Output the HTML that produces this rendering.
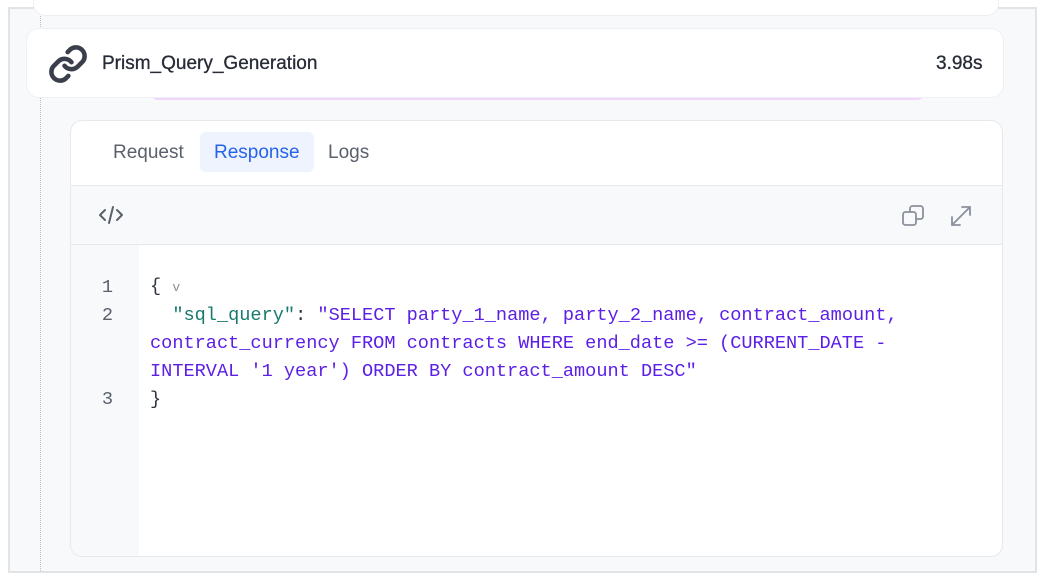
<!DOCTYPE html>
<html><head><style>
body{margin:0;width:1042px;height:577px;background:#fff;font-family:"Liberation Sans",sans-serif;position:relative;overflow:hidden}
.outer{position:absolute;left:8px;top:7px;width:1025px;height:562px;border:2px solid #e2e3e6;background:#f8f9fb}
.abs{position:absolute}
.mono{font-family:"Liberation Mono",monospace;font-size:18.6px}
</style></head><body>
<div class="outer"></div>
<div class="abs" style="left:33px;top:0;width:964px;height:15px;background:#fff;border:1px solid #eceef2;border-top:none;border-radius:0 0 12px 12px"></div>
<div class="abs" style="left:40px;top:16px;height:555px;border-left:1px dotted #b8bcc8"></div>
<div class="abs" style="left:150px;top:92px;width:775px;height:8px;background:#f0d6fb;border-radius:0 0 8px 8px"></div>
<div class="abs" style="left:27px;top:29px;width:976px;height:68px;background:#fff;border-radius:12px;box-shadow:0 0 0 1px #eef0f4"></div>
<svg class="abs" style="left:46px;top:43px" width="44" height="42" viewBox="0 0 24 24" fill="none" stroke="#3a3f4b" stroke-width="2.6" stroke-linecap="round"><path d="M10 13a5 5 0 0 0 7.5.5l3-3a5 5 0 0 0-7-7l-1.7 1.7"/><path d="M14 11a5 5 0 0 0-7.5-.5l-3 3a5 5 0 0 0 7 7l1.7-1.7"/></svg>
<div class="abs" style="left:102px;top:53px;font-size:19px;color:#262b36;-webkit-text-stroke:0.3px #262b36">Prism_Query_Generation</div>
<div class="abs" style="left:936px;top:53px;font-size:19px;color:#262b36;-webkit-text-stroke:0.3px #262b36">3.98s</div>
<div class="abs" style="left:70px;top:120px;width:931px;height:435px;background:#fff;border:1px solid #e6e8ec;border-radius:12px;overflow:hidden">
  <div class="abs" style="left:129px;top:11px;width:114px;height:40px;background:#eef3fd;border-radius:6px"></div>
  <div class="abs" style="left:42px;top:21px;font-size:19px;color:#5a606c">Request</div>
  <div class="abs" style="left:143px;top:21px;font-size:19px;color:#2563eb">Response</div>
  <div class="abs" style="left:257px;top:21px;font-size:19px;color:#5a606c">Logs</div>
  <div class="abs" style="left:0;top:64px;width:931px;height:58px;background:#f8f9fb;border-top:1px solid #e6e8ec;border-bottom:1px solid #e6e8ec"></div>
  <svg class="abs" style="left:26px;top:83px" width="28" height="22" viewBox="0 0 28 22" fill="none" stroke="#5a606c" stroke-width="2" stroke-linecap="round" stroke-linejoin="round"><path d="M8 6l-5 5 5 5M20 6l5 5-5 5M16 3l-4 16"/></svg>
  <svg class="abs" style="left:830px;top:82px" width="26" height="26" viewBox="0 0 26 26" fill="none" stroke="#8a909c" stroke-width="1.8"><rect x="2" y="9" width="13" height="13" rx="2.5"/><path d="M9 9V5.5A2.5 2.5 0 0 1 11.5 3h8A2.5 2.5 0 0 1 22 5.5v8a2.5 2.5 0 0 1-2.5 2.5H15"/></svg>
  <svg class="abs" style="left:877px;top:82px" width="26" height="26" viewBox="0 0 26 26" fill="none" stroke="#8a909c" stroke-width="1.8" stroke-linecap="round"><path d="M4 22L22 4M14 4h8v8M4 14v8h8"/></svg>
  <div class="abs" style="left:0;top:124px;width:68px;height:320px;background:#f8f9fb"></div>
  <div class="abs mono" style="left:0;top:153px;width:42px;text-align:right;line-height:28px;color:#5a606c">1<br>2<br><br><br>3</div>
  <div class="abs mono" style="left:79px;top:152px;line-height:28px;color:#2d3340;white-space:pre">{ <span style="font-size:13px;color:#8a909c">v</span>
  <span style="color:#177a6e">"sql_query"</span>: <span style="color:#5b1fe6">"SELECT party_1_name, party_2_name, contract_amount,</span>
<span style="color:#5b1fe6">contract_currency FROM contracts WHERE end_date &gt;= (CURRENT_DATE -</span>
<span style="color:#5b1fe6">INTERVAL '1 year') ORDER BY contract_amount DESC"</span>
}</div>
</div>
</body></html>
